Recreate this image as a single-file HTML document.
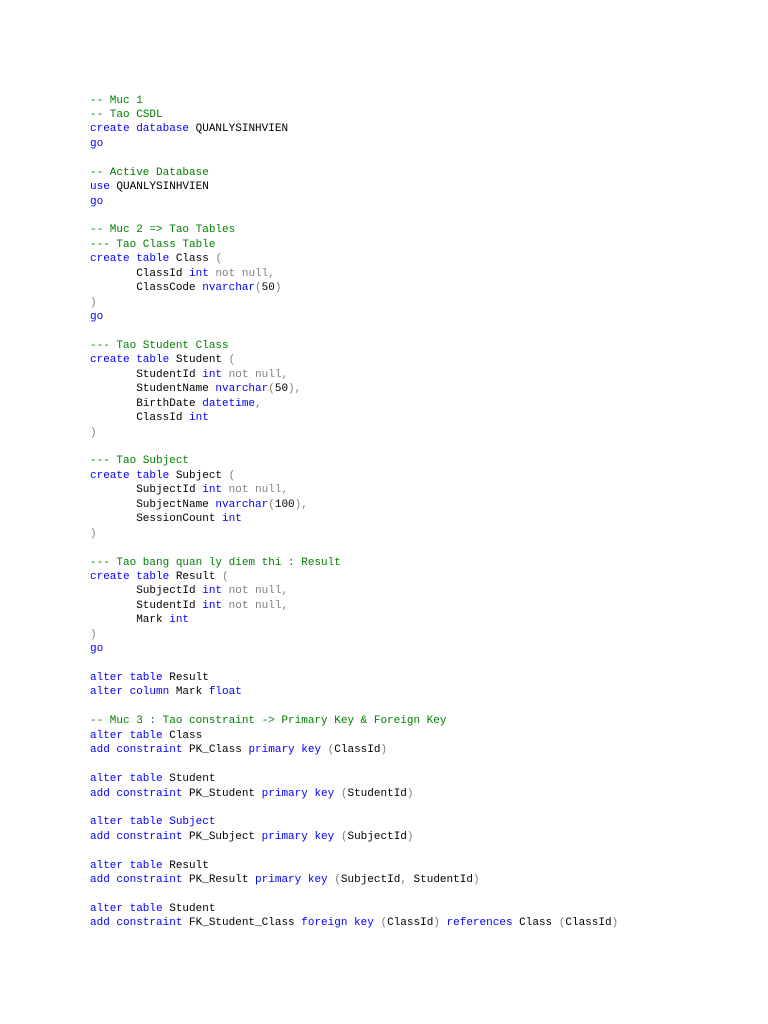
<!DOCTYPE html>
<html><head><style>
body{margin:0;background:#fff;width:768px;height:1024px;overflow:hidden}
pre{position:absolute;left:90px;top:93.5px;margin:0;font-family:"Liberation Mono",monospace;font-size:11px;line-height:14.43px;color:#000}
.c{color:#008000}.k{color:#0000ff}.g{color:#808080}
</style></head><body><pre><span class="c">-- Muc 1</span>
<span class="c">-- Tao CSDL</span>
<span class="k">create database</span> QUANLYSINHVIEN
<span class="k">go</span>

<span class="c">-- Active Database</span>
<span class="k">use</span> QUANLYSINHVIEN
<span class="k">go</span>

<span class="c">-- Muc 2 =&gt; Tao Tables</span>
<span class="c">--- Tao Class Table</span>
<span class="k">create table</span> Class <span class="g">(</span>
       ClassId <span class="k">int</span> <span class="g">not null,</span>
       ClassCode <span class="k">nvarchar</span><span class="g">(</span>50<span class="g">)</span>
<span class="g">)</span>
<span class="k">go</span>

<span class="c">--- Tao Student Class</span>
<span class="k">create table</span> Student <span class="g">(</span>
       StudentId <span class="k">int</span> <span class="g">not null,</span>
       StudentName <span class="k">nvarchar</span><span class="g">(</span>50<span class="g">),</span>
       BirthDate <span class="k">datetime</span><span class="g">,</span>
       ClassId <span class="k">int</span>
<span class="g">)</span>

<span class="c">--- Tao Subject</span>
<span class="k">create table</span> Subject <span class="g">(</span>
       SubjectId <span class="k">int</span> <span class="g">not null,</span>
       SubjectName <span class="k">nvarchar</span><span class="g">(</span>100<span class="g">),</span>
       SessionCount <span class="k">int</span>
<span class="g">)</span>

<span class="c">--- Tao bang quan ly diem thi : Result</span>
<span class="k">create table</span> Result <span class="g">(</span>
       SubjectId <span class="k">int</span> <span class="g">not null,</span>
       StudentId <span class="k">int</span> <span class="g">not null,</span>
       Mark <span class="k">int</span>
<span class="g">)</span>
<span class="k">go</span>

<span class="k">alter table</span> Result
<span class="k">alter column</span> Mark <span class="k">float</span>

<span class="c">-- Muc 3 : Tao constraint -&gt; Primary Key &amp; Foreign Key</span>
<span class="k">alter table</span> Class
<span class="k">add constraint</span> PK_Class <span class="k">primary key</span> <span class="g">(</span>ClassId<span class="g">)</span>

<span class="k">alter table</span> Student
<span class="k">add constraint</span> PK_Student <span class="k">primary key</span> <span class="g">(</span>StudentId<span class="g">)</span>

<span class="k">alter table Subject</span>
<span class="k">add constraint</span> PK_Subject <span class="k">primary key</span> <span class="g">(</span>SubjectId<span class="g">)</span>

<span class="k">alter table</span> Result
<span class="k">add constraint</span> PK_Result <span class="k">primary key</span> <span class="g">(</span>SubjectId<span class="g">,</span> StudentId<span class="g">)</span>

<span class="k">alter table</span> Student
<span class="k">add constraint</span> FK_Student_Class <span class="k">foreign key</span> <span class="g">(</span>ClassId<span class="g">)</span> <span class="k">references</span> Class <span class="g">(</span>ClassId<span class="g">)</span></pre></body></html>
